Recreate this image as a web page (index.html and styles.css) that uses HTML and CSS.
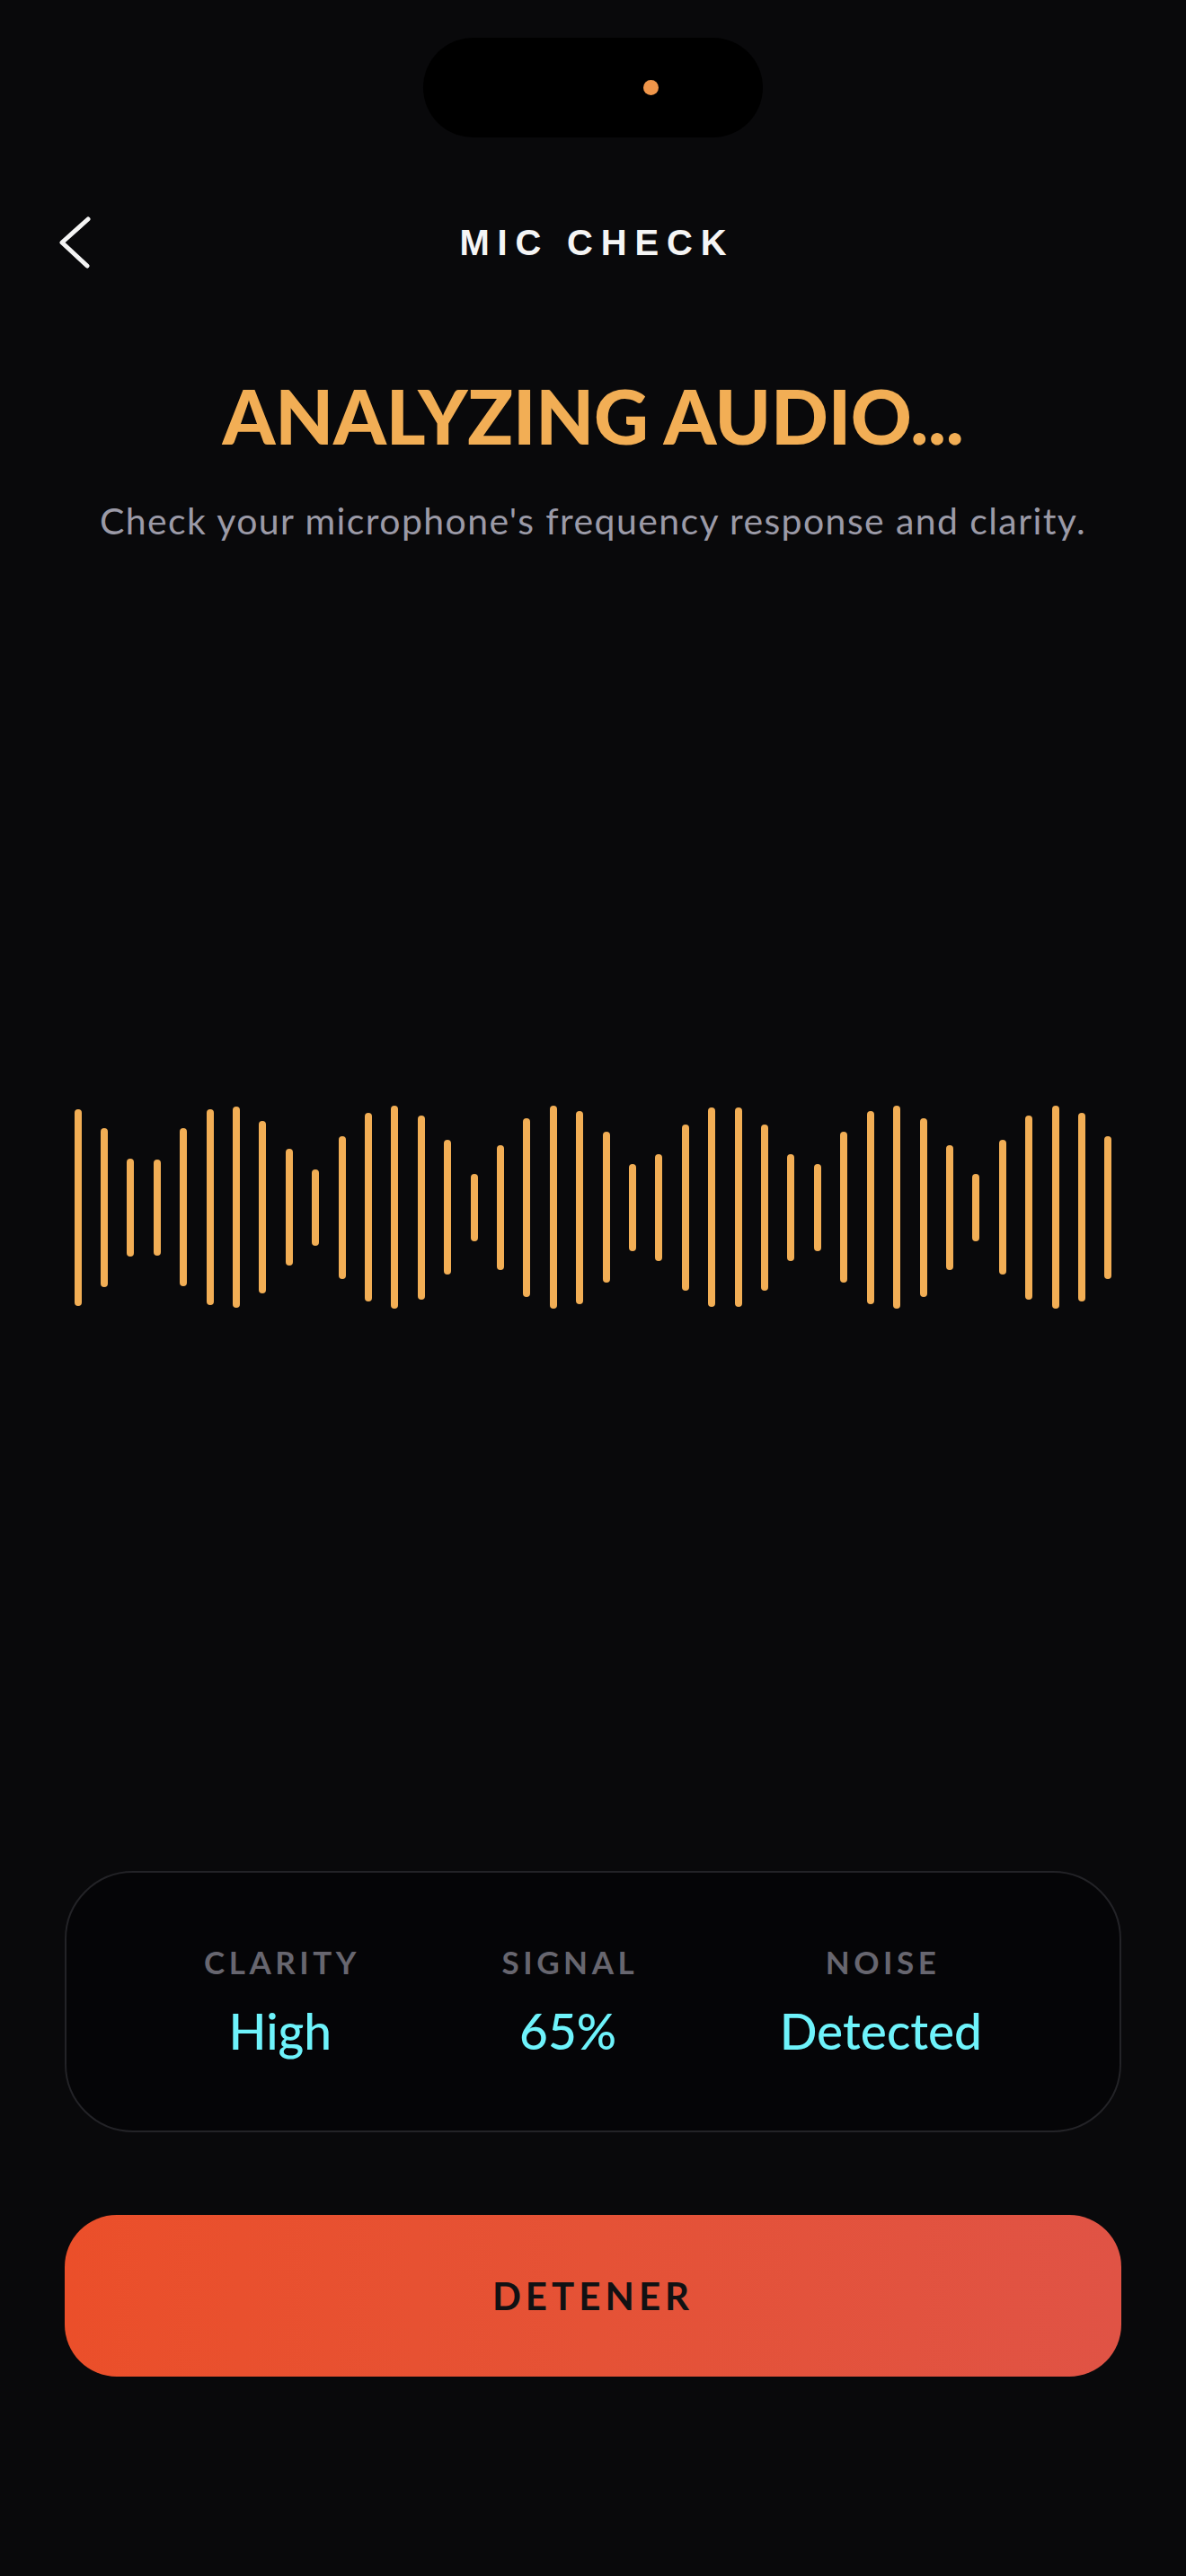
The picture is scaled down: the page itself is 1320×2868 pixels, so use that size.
FILE: index.html
```html
<!DOCTYPE html>
<html lang="en">
<head>
<meta charset="utf-8">
<title>Mic Check</title>
<link rel="stylesheet" href="styles.css">
</head>
<body>
<div class="screen">
  <div class="island"><span class="island-dot"></span></div>

  <header class="topbar">
    <button class="back" aria-label="Back">
      <svg width="44" height="60" viewBox="0 0 44 60" fill="none" stroke="#f5f5f5" stroke-width="5" stroke-linecap="round" stroke-linejoin="round"><path d="M38 4 L9 30 L37 56"/></svg>
    </button>
    <h1 class="title">MIC CHECK</h1>
    <span class="spacer"></span>
  </header>

  <h2 class="heading">ANALYZING AUDIO...</h2>
  <p class="subtitle">Check your microphone's frequency response and clarity.</p>

  <section class="wave-area">
    <div class="wave">
      <span class="bar" style="height:219px"></span>
      <span class="bar" style="height:177px"></span>
      <span class="bar" style="height:109px"></span>
      <span class="bar" style="height:107px"></span>
      <span class="bar" style="height:176px"></span>
      <span class="bar" style="height:218px"></span>
      <span class="bar" style="height:224px"></span>
      <span class="bar" style="height:192px"></span>
      <span class="bar" style="height:130px"></span>
      <span class="bar" style="height:85px"></span>
      <span class="bar" style="height:159px"></span>
      <span class="bar" style="height:210px"></span>
      <span class="bar" style="height:226px"></span>
      <span class="bar" style="height:205px"></span>
      <span class="bar" style="height:150px"></span>
      <span class="bar" style="height:75px"></span>
      <span class="bar" style="height:139px"></span>
      <span class="bar" style="height:199px"></span>
      <span class="bar" style="height:226px"></span>
      <span class="bar" style="height:215px"></span>
      <span class="bar" style="height:168px"></span>
      <span class="bar" style="height:97px"></span>
      <span class="bar" style="height:119px"></span>
      <span class="bar" style="height:185px"></span>
      <span class="bar" style="height:222px"></span>
      <span class="bar" style="height:222px"></span>
      <span class="bar" style="height:185px"></span>
      <span class="bar" style="height:119px"></span>
      <span class="bar" style="height:97px"></span>
      <span class="bar" style="height:168px"></span>
      <span class="bar" style="height:215px"></span>
      <span class="bar" style="height:226px"></span>
      <span class="bar" style="height:199px"></span>
      <span class="bar" style="height:139px"></span>
      <span class="bar" style="height:75px"></span>
      <span class="bar" style="height:150px"></span>
      <span class="bar" style="height:205px"></span>
      <span class="bar" style="height:226px"></span>
      <span class="bar" style="height:210px"></span>
      <span class="bar" style="height:159px"></span>
    </div>
  </section>

  <section class="stats">
    <div class="stat">
      <span class="stat-label">CLARITY</span>
      <span class="stat-value">High</span>
    </div>
    <div class="stat">
      <span class="stat-label">SIGNAL</span>
      <span class="stat-value">65%</span>
    </div>
    <div class="stat">
      <span class="stat-label">NOISE</span>
      <span class="stat-value">Detected</span>
    </div>
  </section>

  <button class="stop">DETENER</button>
</div>
</body>
</html>
```

FILE: styles.css
```css
* { box-sizing: border-box; }

html, body {
  margin: 0;
  padding: 0;
  background: #09090b;
}

body {
  font-family: "Lato", "Noto Sans", sans-serif;
  color: #f5f5f5;
}

.screen {
  width: 1320px;
  height: 2868px;
  display: flex;
  flex-direction: column;
  align-items: stretch;
  padding-bottom: 222px;
}

.island {
  align-self: center;
  margin-top: 42px;
  width: 378px;
  height: 111px;
  border-radius: 56px;
  background: #000;
  display: flex;
  align-items: center;
  padding-left: 245px;
  flex-shrink: 0;
}

.island-dot {
  width: 17px;
  height: 17px;
  border-radius: 50%;
  background: #f0964a;
}

.topbar {
  margin-top: 77px;
  height: 80px;
  display: grid;
  grid-template-columns: 1fr auto 1fr;
  align-items: center;
  padding-left: 60px;
  flex-shrink: 0;
}

.back {
  justify-self: start;
  background: none;
  border: 0;
  padding: 0;
  width: 44px;
  height: 60px;
  display: flex;
}

.title {
  margin: 0;
  font-family: "Liberation Sans", Arial, sans-serif;
  font-weight: 700;
  font-size: 40px;
  line-height: 80px;
  letter-spacing: 0.22em;
  margin-right: -0.22em;
  color: #f5f5f5;
  transform: translateX(-30px);
}

.heading {
  margin: 111px 0 0;
  text-align: center;
  font-family: "Lato", sans-serif;
  font-weight: 900;
  font-size: 84px;
  line-height: 84px;
  letter-spacing: -0.003em;
  color: #f2ae55;
}

.subtitle {
  margin: 49px 0 0;
  text-align: center;
  font-size: 41px;
  line-height: 1.25;
  letter-spacing: 1.4px;
  color: #9b9aa7;
}

.wave-area {
  flex: 1;
  display: flex;
  align-items: center;
  justify-content: center;
}

.wave {
  width: 1155px;
  height: 240px;
  display: flex;
  align-items: center;
  justify-content: space-between;
}

.bar {
  width: 8px;
  border-radius: 4px;
  background: #f2ae55;
}

.stats {
  margin: 0 72px;
  height: 291px;
  border: 2px solid #232327;
  border-radius: 76px;
  background: #050507;
  display: flex;
  justify-content: space-around;
  align-items: center;
  padding: 0 72px;
  flex-shrink: 0;
}

.stat {
  display: flex;
  flex-direction: column;
  align-items: center;
  gap: 23px;
}

.stat-label {
  font-size: 35px;
  line-height: 1.2;
  font-weight: 700;
  letter-spacing: 0.13em;
  margin-right: -0.13em;
  color: #67666f;
}

.stat-value {
  font-size: 55px;
  line-height: 1.2;
  font-weight: 500;
  color: #6ef3fb;
}

.stop {
  margin: 92px 72px 0;
  height: 180px;
  border: 0;
  border-radius: 58px;
  background: linear-gradient(90deg, #eb4f2a 0%, #e55236 50%, #e05345 100%);
  font-family: "Lato", sans-serif;
  font-size: 42px;
  font-weight: 700;
  letter-spacing: 0.12em;
  color: #111113;
  flex-shrink: 0;
  display: flex;
  align-items: center;
  justify-content: center;
}
```
